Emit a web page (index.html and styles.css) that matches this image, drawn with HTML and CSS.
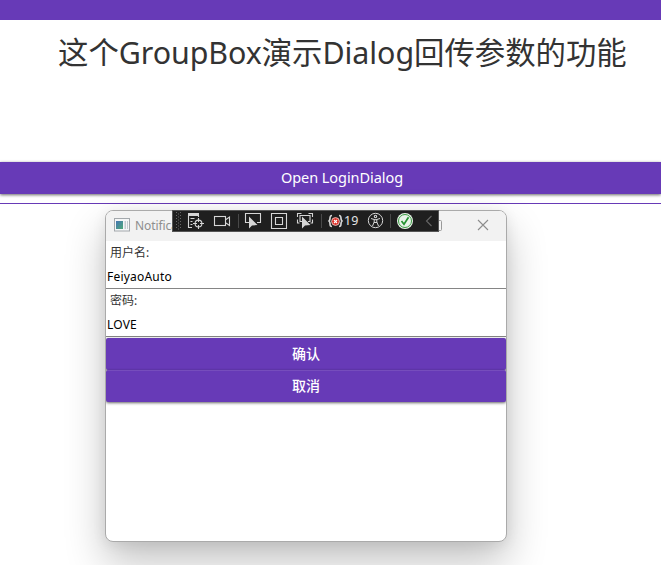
FILE: index.html
```html
<!DOCTYPE html>
<html lang="zh-CN">
<head>
<meta charset="utf-8">
<title>Dialog</title>
<link rel="stylesheet" href="styles.css">
</head>
<body>
<main class="host">
  <header class="host-bar"></header>
  <h1 class="heading">这个<span class="latin">GroupBox</span>演示<span class="latin">Dialog</span>回传参数的功能</h1>
  <button class="open-button">Open LoginDialog</button>
  <div class="rule"></div>
</main>

<section class="window">
  <div class="titlebar">
    <svg class="app-icon" width="16" height="14" viewBox="0 0 16 14">
      <defs><linearGradient id="pane" x1="0" y1="0" x2="1" y2="1"><stop offset="0" stop-color="#4676b4"/><stop offset="1" stop-color="#4da878"/></linearGradient></defs>
      <rect x=".5" y=".5" width="15" height="12.5" fill="#f5f6f7" stroke="#a3a8ac"/>
      <rect x="2" y="3" width="7" height="8" fill="url(#pane)"/>
      <path d="M10.5 3h1.5v8h-1.5zM13 3h1v8h-1z" fill="#c5cbd0"/>
    </svg>
    <span class="title">Notification</span>
    <svg class="maximize" width="11" height="11" viewBox="0 0 11 11"><rect x=".5" y=".5" width="10" height="10" rx="1" fill="none" stroke="#999"/></svg>
    <svg class="close" width="12" height="12" viewBox="0 0 12 12"><path d="M1 1l10 10M11 1L1 11" stroke="#8c8c8c" stroke-width="1.1"/></svg>
  </div>
  <form class="form">
    <label class="label">用户名:</label>
    <div class="field">FeiyaoAuto</div>
    <label class="label">密码:</label>
    <div class="field">LOVE</div>
    <button type="button" class="action">确认</button>
    <button type="button" class="action">取消</button>
  </form>
</section>

<aside class="debugbar">
  <svg width="267" height="22" viewBox="0 0 267 22" fill="none" stroke="#d6d6d6" stroke-width="1.1">
    <g stroke="#686868" stroke-width="1" stroke-dasharray="1 2"><path d="M4.500 2v18M8.500 2v18"/><path d="M6.500 3.500v16"/></g>
    <path d="M16 3h11v3H16z" fill="#d6d6d6" stroke="none"/>
    <path d="M16.500 5v12.500H20M26.500 5v2M18.500 8.500h4M18.500 11.500h2M18.500 14.500h2"/>
    <circle cx="26.500" cy="13.500" r="3.400"/><path d="M26.500 8v4M26.500 15v4M21 13.500h4M28 13.500h4"/>
    <rect x="42.500" y="6.500" width="11" height="9"/><path d="M54 9.500l3.500-2.500v8.500L54 13"/>
    <path d="M66.500 4v14M149.500 4v14M218.500 4v14" stroke="#494949" stroke-width="1"/>
    <path d="M77 12.500h-3.500v-9h15v9H85"/><path d="M77 6.500v12l3-3 5.500-.5z" fill="#d6d6d6" stroke="none"/>
    <path d="M99.500 3.500h15v15h-15zM103.500 7.500h7v7h-7z"/>
    <path d="M125.500 7V3.500h4M136.500 3.500h4V7M125.500 9.500v3.500h2M140.500 9.500v3.500h-2"/><path d="M130 11.500h-2v-6h10v6h-2"/>
    <path d="M130 6.500v12l3-3 5.500-.5z" fill="#d6d6d6" stroke="none"/>
    <path d="M160 5.500c-2 0-2 1-2 3 0 1.500-.5 2-1 2.500.5.500 1 1 1 2.500 0 2 0 3 2 3M167 5.500c2 0 2 1 2 3 0 1.500.5 2 1 2.500-.5.500-1 1-1 2.500 0 2 0 3-2 3" stroke-width="1.700"/>
    <circle cx="163.500" cy="11.500" r="3.900" fill="#dc3028" stroke="#f3ded9" stroke-width=".8"/><path d="M162 10l3 3M165 10l-3 3" stroke="#fff"/>
    <circle cx="203.500" cy="10.500" r="7.200" stroke-width="1"/><circle cx="203.500" cy="6.500" r="1.200"/>
    <path d="M199 8.500l3.200 1v2.500l-1.700 4M208 8.500l-3.200 1v2.500l1.700 4M202 9.700h3M202 12.500h3" stroke-width="1"/>
    <circle cx="233" cy="11" r="8" fill="#e9f3e9" stroke="none"/><circle cx="233" cy="11" r="6.500" stroke="#3b9b43" stroke-width="1"/>
    <path d="M229.500 11l2.500 3.300 4.500-7" stroke="#259331" stroke-width="1.700"/>
    <path d="M259.500 6l-5 5 5 5" stroke="#666"/>
  </svg>
  <span class="count">19</span>
</aside>
</body>
</html>
```
FILE: styles.css
```css
* { box-sizing: border-box; }

body {
  margin: 0;
  width: 661px;
  height: 565px;
  overflow: hidden;
  position: relative;
  background: #fff;
  font-family: "Noto Sans", "Noto Sans CJK SC", sans-serif;
}

.host { display: flex; flex-direction: column; }

.host-bar { height: 20px; background: #673ab7; }

.heading {
  height: 142px;
  margin: 0;
  padding: 8px 0 0 58px;
  font-family: "Noto Sans CJK SC", sans-serif;
  font-size: 30.4px;
  line-height: 46px;
  font-weight: 400;
  color: #333;
  white-space: nowrap;
}

.latin { font-family: "Noto Sans", sans-serif; letter-spacing: -.08px; }

.open-button {
  height: 32px;
  border: 0;
  padding: 0 0 2px 23px;
  background: #673ab7;
  color: #fff;
  font: 14.5px/30px "Noto Sans", sans-serif;
  letter-spacing: -.06px;
  box-shadow: 0 1px 3px rgba(0, 0, 0, .6);
}

.rule { height: 1px; margin-top: 9px; background: #673ab7; }

.window {
  position: absolute;
  left: 105px;
  top: 210px;
  width: 402px;
  height: 332px;
  border: 1px solid #aaa;
  border-radius: 8px;
  overflow: hidden;
  background: #fff;
  box-shadow: 0 20px 40px rgba(0, 0, 0, .24), 0 2px 14px rgba(0, 0, 0, .08);
}

.titlebar {
  display: flex;
  align-items: center;
  height: 30px;
  padding: 0 17px 2px 8px;
  background: #f2f2f2;
}

.title { margin-left: 5px; font-size: 12px; letter-spacing: -.1px; color: #8e8e8e; }
.maximize { margin-left: auto; margin-right: 35px; }

.form { display: flex; flex-direction: column; }

.label {
  height: 24px;
  padding-left: 4px;
  font: 12px/23px "Noto Sans", "Noto Sans CJK SC", sans-serif;
  color: #333;
}

.field {
  height: 24px;
  padding-left: 1px;
  border-bottom: 1px solid #858585;
  font-size: 12px;
  line-height: 23px;
  letter-spacing: .2px;
  color: #000;
}

.action {
  height: 32px;
  padding: 0 0 2px;
  border: 0;
  border-radius: 2px;
  background: #673ab7;
  color: #fff;
  font: 500 14px/30px "Noto Sans CJK SC", sans-serif;
  box-shadow: 0 1px 3px rgba(0, 0, 0, .6);
}

.action:first-of-type { margin-top: 1px; }
.action + .action { border-top: 1px solid #764dbc; line-height: 29px; }

.debugbar {
  position: absolute;
  left: 172px;
  top: 210px;
  width: 267px;
  height: 22px;
  background: #1f1f1f;
  outline: 1px solid #555;
  outline-offset: -1px;
}

.debugbar svg { display: block; }

.count {
  position: absolute;
  left: 172px;
  top: 0;
  font: 12.5px/21px "Noto Sans", sans-serif;
  color: #e4e4e4;
}
```
